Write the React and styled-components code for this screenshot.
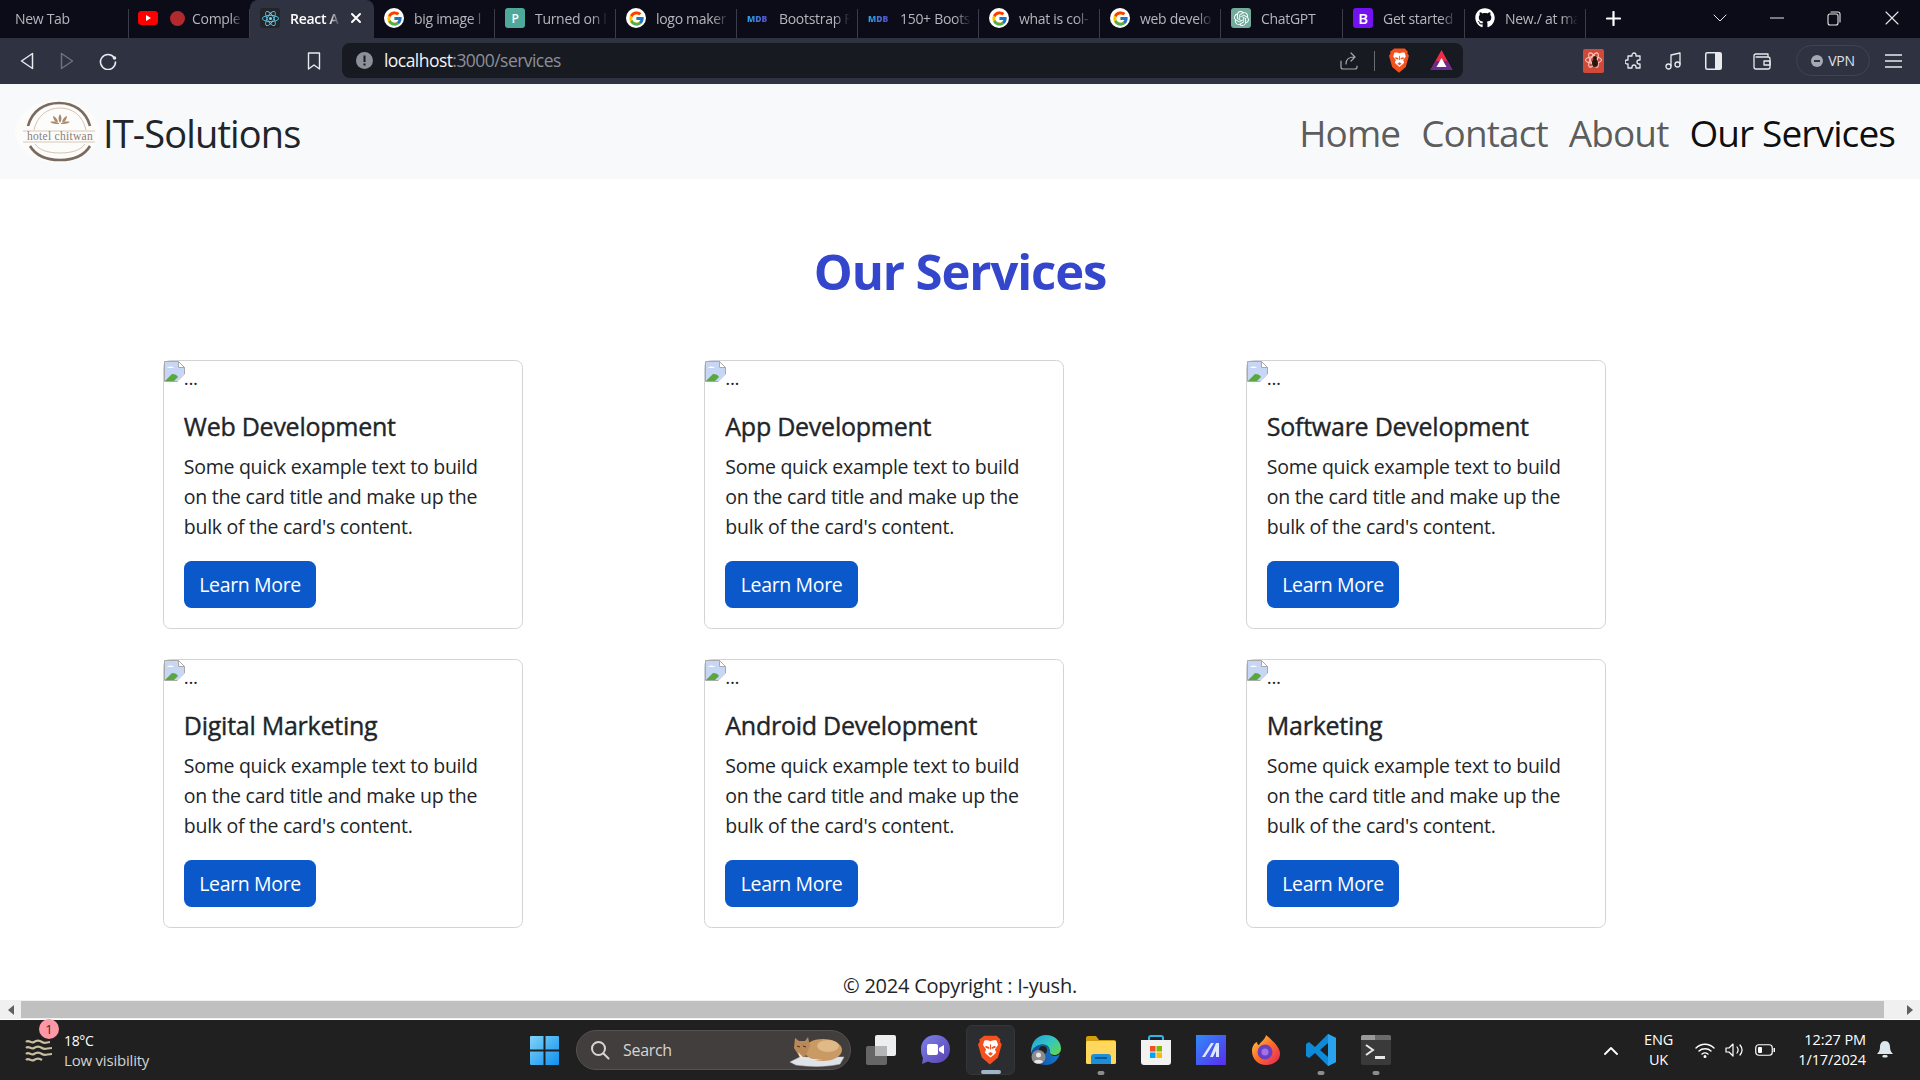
import React from "react";
import styled, { createGlobalStyle } from "styled-components";
import { FcGoogle } from "react-icons/fc";
import { FaGithub } from "react-icons/fa";
import { SiOpenai, SiReact } from "react-icons/si";

const SANS = `"Open Sans", "Noto Sans", "Liberation Sans", sans-serif`;

const Global = createGlobalStyle`
  html, body { margin: 0; padding: 0; width: 1920px; height: 1080px; overflow: hidden; background: #fff; }
  body { font-family: ${SANS}; }
  * { box-sizing: border-box; }
`;

const Screen = styled.div`
  width: 1920px;
  height: 1080px;
  display: flex;
  flex-direction: column;
  overflow: hidden;
`;

/* ---------- browser tab strip ---------- */
const TabStrip = styled.div`
  height: 38px;
  flex: none;
  background: #0b0c17;
  display: flex;
  align-items: stretch;
`;
const Tab = styled.div`
  width: ${(p) => p.$w || 121}px;
  flex: none;
  display: flex;
  align-items: center;
  gap: ${(p) => p.$gap || 10}px;
  padding: 0 ${(p) => (p.$active ? 12 : 8)}px 2px ${(p) => p.$pl || 10}px;
  color: ${(p) => (p.$active ? "#ffffff" : "#b4b6bd")};
  font-size: 14px;
  letter-spacing: -0.3px;
  font-weight: ${(p) => (p.$active ? 600 : 400)};
  background: ${(p) => (p.$active ? "#2f3341" : "transparent")};
  border-radius: ${(p) => (p.$active ? "8px 8px 0 0" : "0")};
  position: relative;
  white-space: nowrap;
  &::after {
    content: "";
    display: ${(p) => (p.$active || p.$noSep ? "none" : "block")};
    position: absolute;
    right: 0;
    top: 9px;
    bottom: 0;
    width: 1px;
    background: #3a3c47;
  }
`;
const TabTitle = styled.span`
  flex: 1;
  min-width: 0;
  overflow: hidden;
  -webkit-mask-image: linear-gradient(to right, #000 78%, transparent 100%);
  mask-image: linear-gradient(to right, #000 78%, transparent 100%);
`;
const Favicon = styled.span`
  width: 20px;
  height: 20px;
  flex: none;
  display: inline-flex;
  align-items: center;
  justify-content: center;
  border-radius: ${(p) => p.$radius || 3}px;
  background: ${(p) => p.$bg || "transparent"};
  color: ${(p) => p.$fg || "#fff"};
  font-size: ${(p) => p.$size || 13}px;
  font-weight: 600;
`;
const MdbMark = styled.span`
  width: 22px;
  flex: none;
  font-size: 8.5px;
  font-weight: 800;
  letter-spacing: 0;
  background: linear-gradient(90deg, #2aa6e8, #5a46c8);
  -webkit-background-clip: text;
  background-clip: text;
  color: transparent;
`;
const Dot = styled.span`
  width: 15px;
  height: 15px;
  margin-right: -5px;
  border-radius: 50%;
  background: #b22a2d;
  flex: none;
`;
const WindowControls = styled.div`
  margin-left: auto;
  display: flex;
  align-items: center;
  height: 100%;
  padding-right: 21px;
  padding-bottom: 2px;
  color: #e8e8ea;
`;
const ControlSlot = styled.span`
  display: inline-flex;
  margin-left: ${(p) => p.$ml}px;
`;
const NewTabPlus = styled.span`
  display: inline-flex;
  margin-left: 20px;
  align-self: center;
  padding-bottom: 2px;
  color: #fff;
`;

/* ---------- browser toolbar ---------- */
const Toolbar = styled.div`
  height: 46px;
  flex: none;
  background: #2f3341;
  display: flex;
  align-items: center;
  padding-left: 20px;
  padding-bottom: 1px;
  color: #e9eaee;
`;
const ToolSlot = styled.span`
  display: inline-flex;
  align-items: center;
  justify-content: center;
  flex: none;
  margin-left: ${(p) => p.$ml || 0}px;
  margin-right: ${(p) => p.$mr || 0}px;
  color: ${(p) => p.$color || "inherit"};
`;
const UrlBar = styled.div`
  width: 1121px;
  height: 35px;
  margin-left: 21px;
  flex: none;
  background: #181a21;
  border-radius: 8px;
  display: flex;
  align-items: center;
  padding-left: 14px;
`;
const UrlText = styled.span`
  margin-left: 11px;
  padding-bottom: 1px;
  font-size: 17.5px;
  letter-spacing: -0.55px;
  color: #f2f3f5;
  flex: 1;
  & > em { font-style: normal; color: #8c8f98; }
`;
const UrlDivider = styled.span`
  width: 1px;
  height: 20px;
  background: #6a6c74;
  margin-left: 16px;
`;
const VpnPill = styled.div`
  margin-left: 25px;
  width: 74px;
  height: 31px;
  border: 1px solid #3f4352;
  border-radius: 16px;
  display: flex;
  align-items: center;
  justify-content: center;
  gap: 5px;
  font-size: 14px;
  letter-spacing: -0.3px;
  color: #dfe0e5;
`;
const VpnDot = styled.span`
  width: 12px;
  height: 12px;
  border-radius: 50%;
  background: #a6a8b3;
  position: relative;
  &::after {
    content: "";
    position: absolute;
    left: 3px;
    right: 3px;
    top: 5px;
    height: 2px;
    background: #2f3341;
  }
`;

/* ---------- page ---------- */
const Page = styled.div`
  flex: 1;
  min-height: 0;
  background: #fff;
  color: #212529;
  display: flex;
  flex-direction: column;
`;
const Navbar = styled.nav`
  height: 95px;
  flex: none;
  background: #f8f9fa;
  display: flex;
  align-items: center;
  padding: 0 25px 0 15px;
`;
const Brand = styled.div`
  display: flex;
  align-items: center;
  gap: 3px;
  font-size: 38px;
  letter-spacing: -0.85px;
  color: #212529;
`;
const BrandName = styled.span`
  position: relative;
  top: 1px;
`;
const NavLinks = styled.div`
  margin-left: auto;
  display: flex;
  gap: 21px;
  position: relative;
  top: 1px;
`;
const NavLink = styled.a`
  font-size: 37px;
  letter-spacing: -0.9px;
  color: ${(p) => (p.$active ? "rgba(0,0,0,0.95)" : "rgba(0,0,0,0.65)")};
`;
const Heading = styled.h1`
  margin: 59px 0 0;
  height: 66px;
  line-height: 66px;
  text-align: center;
  font-size: 49px;
  font-weight: 700;
  letter-spacing: -1.1px;
  color: #3346cc;
`;
const CardGrid = styled.div`
  margin-top: 56px;
  padding-left: 162.8px;
  display: grid;
  grid-template-columns: repeat(3, 360px);
  column-gap: 181.5px;
  row-gap: 30px;
`;
const Card = styled.article`
  height: 269px;
  border: 1.25px solid #d2d3d4;
  border-radius: 7.5px;
  background: #fff;
  display: flex;
  flex-direction: column;
`;
const BrokenImage = styled.div`
  height: 31px;
  display: flex;
  align-items: flex-start;
  font-size: 19px;
  line-height: 26px;
  letter-spacing: -0.4px;
  & > span { margin-top: 4px; margin-left: -1px; }
`;
const CardBody = styled.div`
  padding: 20px 20px;
`;
const CardTitle = styled.h5`
  margin: -1px 0 11px;
  font-size: 25px;
  line-height: 30px;
  font-weight: 500;
  letter-spacing: -0.25px;
  -webkit-text-stroke: 0.4px #212529;
  color: #212529;
`;
const CardText = styled.p`
  margin: 0 0 19px;
  font-size: 19.5px;
  line-height: 30px;
  letter-spacing: -0.27px;
  color: #212529;
`;
const Button = styled.a`
  display: inline-flex;
  align-items: center;
  justify-content: center;
  width: 132.5px;
  height: 47.5px;
  padding-top: 1px;
  border-radius: 7.5px;
  background: #0a58ca;
  color: #fff;
  font-size: 19.5px;
  letter-spacing: -0.35px;
`;
const Footer = styled.footer`
  margin-top: 43px;
  text-align: center;
  font-size: 20px;
  line-height: 30px;
  letter-spacing: -0.24px;
  color: #212529;
`;

/* ---------- horizontal scrollbar ---------- */
const ScrollBar = styled.div`
  height: 20px;
  flex: none;
  background: #f0f0f0;
  display: flex;
  align-items: center;
  border-bottom: 1px solid #fff;
`;
const ScrollArrow = styled.span`
  width: ${(p) => p.$w}px;
  flex: none;
  display: flex;
  justify-content: flex-start;
  padding-left: ${(p) => p.$pl}px;
`;
const ScrollThumb = styled.div`
  flex: 1;
  height: 17px;
  background: #c0c0c0;
`;
const Arrow = styled.span`
  width: 0;
  height: 0;
  border-top: 5px solid transparent;
  border-bottom: 5px solid transparent;
  ${(p) => (p.$left ? "border-right: 6px solid #5f5f5f;" : "border-left: 6px solid #5f5f5f;")}
`;

/* ---------- windows taskbar ---------- */
const Taskbar = styled.div`
  height: 60px;
  flex: none;
  background: #202020;
  display: flex;
  align-items: center;
  color: #fff;
  position: relative;
`;
const Weather = styled.div`
  width: 530px;
  flex: none;
  display: flex;
  align-items: center;
  padding-left: 25px;
  gap: 10px;
  position: relative;
`;
const WeatherBadge = styled.span`
  position: absolute;
  left: 39px;
  top: -12px;
  width: 20px;
  height: 20px;
  border-radius: 50%;
  background: #ff97a6;
  color: #4a1d25;
  font-size: 13px;
  display: flex;
  align-items: center;
  justify-content: center;
`;
const WeatherText = styled.div`
  font-size: 14px;
  line-height: 20px;
  letter-spacing: -0.35px;
  & > small { display: block; margin-top: -1px; font-size: 15px; letter-spacing: -0.2px; color: #d3d3d3; }
`;
const SearchPill = styled.div`
  margin-left: 17px;
  width: 275px;
  height: 40px;
  flex: none;
  border-radius: 20px;
  background: #423e3d;
  border: 1px solid #55514f;
  display: flex;
  align-items: center;
  padding-left: 13px;
  gap: 13px;
  font-size: 16px;
  letter-spacing: -0.3px;
  color: #d7d5d4;
`;
const SearchCat = styled.span`
  margin-left: auto;
  margin-right: 4px;
  display: inline-flex;
`;
const Dock = styled.div`
  display: flex;
  align-items: center;
  margin-left: 2px;
`;
const DockItem = styled.div`
  width: ${(p) => (p.$active ? 49 : 55)}px;
  margin: ${(p) => (p.$active ? "0 3px" : "0")};
  height: 50px;
  display: flex;
  align-items: center;
  justify-content: center;
  position: relative;
  border-radius: 6px;
  background: ${(p) => (p.$active ? "#2b2d30" : "transparent")};
  border: ${(p) => (p.$active ? "1px solid #353638" : "none")};
  &::after {
    content: "";
    display: ${(p) => (p.$running || p.$active ? "block" : "none")};
    position: absolute;
    bottom: 0;
    left: 50%;
    transform: translateX(-50%);
    width: ${(p) => (p.$active ? 20 : 7)}px;
    height: 4px;
    border-radius: 2px;
    background: ${(p) => (p.$active ? "#9fb5c9" : "#8d8d8d")};
  }
`;
const Tray = styled.div`
  margin-left: auto;
  display: flex;
  align-items: center;
  padding-right: 27px;
`;
const TraySlot = styled.span`
  display: inline-flex;
  margin-left: ${(p) => p.$ml}px;
`;
const Lang = styled.div`
  margin-left: 26px;
  text-align: center;
  font-size: 14.5px;
  line-height: 20px;
  letter-spacing: -0.2px;
`;
const Clock = styled.div`
  margin-left: 8px;
  width: 83px;
  flex: none;
  text-align: right;
  font-size: 14.5px;
  line-height: 20px;
  letter-spacing: -0.1px;
  white-space: nowrap;
`;

/* ---------- drawings ---------- */
const Ic = ({ w = 18, h = 18, vb, children, sw = 1.6, fill = "none", stroke = "currentColor" }) => (
  <svg width={w} height={h} viewBox={vb || `0 0 ${w} ${h}`} fill={fill} stroke={stroke} strokeWidth={sw} strokeLinecap="round" strokeLinejoin="round">
    {children}
  </svg>
);

const YouTube = () => (
  <svg width="20" height="14" viewBox="0 0 20 14"><rect width="20" height="14" rx="3.5" fill="#ff0000" /><path d="M8 4l5 3-5 3z" fill="#fff" /></svg>
);
const Google = () => (
  <Favicon $bg="#fff" $radius={10}><FcGoogle size={17} /></Favicon>
);
const HotelLogo = () => (
  <svg width="85" height="63" viewBox="0 0 85 63">
    <ellipse cx="42.5" cy="31.5" rx="42.5" ry="31.5" fill="#fcfcfb" />
    <path d="M13 26C17 11 29 3 44 3s27 8 31 23" fill="none" stroke="#7b6a5f" strokeWidth="2.6" />
    <path d="M19 30C22 16 32 8 45 8s23 8 26 22" fill="none" stroke="#cdb49c" strokeWidth="0.8" />
    <path d="M35 22c3 2 6 2 9 2v-1c-2-1-5-2-9-1zM55 22c-3 2-6 2-9 2v-1c2-1 5-2 9-1zM45 23c-2-3-2-6 0-9 2 3 2 6 0 9zM43 23c-3-1-5-4-5-7 3 1 5 4 5 7zM47 23c3-1 5-4 5-7-3 1-5 4-5 7z" fill="#ab8a6c" />
    <path d="M8 31h72M8 42h72" stroke="#d6c3b0" strokeWidth="0.9" />
    <text x="45" y="40" textAnchor="middle" fontFamily="Liberation Serif, serif" fontSize="11.5" fill="#8b7d75" letterSpacing="0.3">hotel chitwan</text>
    <path d="M20 44C24 50 33 53 45 53s21-3 25-9" fill="none" stroke="#cdb49c" strokeWidth="0.8" />
    <path d="M15 46C21 56 32 60 45 60s24-4 30-14" fill="none" stroke="#7b6a5f" strokeWidth="2.6" />
  </svg>
);
const BrokenIcon = () => (
  <svg width="21" height="21" viewBox="0 0 21 21">
    <path d="M.5.5h14l6 6v7L14 20.5H.5z" fill="#c6d6f4" stroke="#a9a9a9" />
    <path d="M14.5.5v6h6z" fill="#fff" stroke="#a9a9a9" />
    <path d="M3 7c2-2 5-2 7 0H3z" fill="#fff" />
    <path d="M1 20l7-7c3 0 5 1 6 3l-4 4z" fill="#58a83f" />
    <path d="M13 21l8-8v8z" fill="#fff" />
  </svg>
);
const BraveLogo = ({ size = 21 }) => (
  <svg width={size} height={size * 1.2} viewBox="0 0 20 24">
    <path d="M5 0.500h10l3 3-.5 1.500 1.500 2.500-3 10.500-6.500 5.500-6.500-5.500L0 7.500 1.500 5 1 3.500z" fill="#f4511e" />
    <path d="M10 5c1.800-1 3.500-1 5-.5l1 3.500-2.500 3.500 1 2.500-1.500 1.500L10 18l-3-2.500L5.500 14l1-2.500L4 8l1-3.500C6.500 4 8.200 4 10 5z" fill="#fff" />
    <path d="M6.500 9.500l2 .8M13.500 9.500l-2 .8" stroke="#f4511e" strokeWidth="1.400" strokeLinecap="round" />
    <path d="M8 15l2-1.500 2 1.500-2 1.500z" fill="#f4511e" />
    <path d="M10 7.500v4" stroke="#f4511e" strokeWidth=".8" />
  </svg>
);
const BatLogo = () => (
  <svg width="23" height="23" viewBox="0 0 23 23">
    <path d="M11.5 1L22.5 21H.5z" fill="#ea2f4b" />
    <path d="M.5 21l5-9h12l5 9z" fill="#6b2c91" />
    <path d="M11.5 9l5 9h-10z" fill="#fff" />
  </svg>
);
const BugExtension = () => (
  <svg width="21" height="24" viewBox="0 0 21 24">
    <rect width="21" height="24" rx="2" fill="#d04a3a" />
    <g fill="none" stroke="#f7c9bd" strokeWidth="1.1"><ellipse cx="10.5" cy="11" rx="8" ry="3.2" /><ellipse cx="10.5" cy="11" rx="8" ry="3.2" transform="rotate(60 10.5 11)" /><ellipse cx="10.5" cy="11" rx="8" ry="3.2" transform="rotate(120 10.5 11)" /></g>
    <ellipse cx="12" cy="14" rx="3" ry="4" fill="#2a1512" />
    <circle cx="12" cy="9" r="2" fill="#2a1512" />
  </svg>
);
const WindowsLogo = () => (
  <svg width="29" height="29" viewBox="0 0 29 29">
    <defs><linearGradient id="win" x1="0" y1="0" x2="1" y2="1"><stop offset="0" stopColor="#7fd4f7" /><stop offset="1" stopColor="#0f8ff0" /></linearGradient></defs>
    <path d="M0 1a1 1 0 011-1h12.500v13.500H0zM15.500 0H28a1 1 0 011 1v12.500H15.500zM0 15.500h13.500V29H1a1 1 0 01-1-1zM15.500 15.500H29V28a1 1 0 01-1 1H15.500z" fill="url(#win)" />
  </svg>
);
const Cat = () => (
  <svg width="58" height="34" viewBox="0 0 58 34">
    <path d="M2 29l10-5h44l-4 7c-12 3-30 3-44 1z" fill="#dfe3e8" stroke="#bfc4ca" strokeWidth=".5" />
    <ellipse cx="35" cy="17" rx="19" ry="11" fill="#c99a63" />
    <ellipse cx="40" cy="13" rx="11" ry="6" fill="#e0b988" />
    <path d="M7 5l4 3h6l3-4 2 9-5 11-6-1-5-8z" fill="#b98a57" />
    <path d="M10 19l7 7h18c-8 1-18 2-23-1z" fill="#f2e6d2" />
    <path d="M9 13l3 1M15 13l3 1" stroke="#3f2e1e" strokeWidth="1" />
  </svg>
);
const TaskView = () => (
  <svg width="30" height="30" viewBox="0 0 30 30">
    <rect x="9" y="0" width="21" height="21" rx="2" fill="#eceef0" />
    <rect x="0" y="11" width="21" height="19" rx="2" fill="#6a6a6a" opacity=".95" />
    <rect x="9" y="11" width="12" height="10" fill="#b5b5b5" />
  </svg>
);
const Meet = () => (
  <svg width="29" height="30" viewBox="0 0 29 30">
    <defs><linearGradient id="meet" x1="0" y1="0" x2="1" y2="1"><stop offset="0" stopColor="#7b83eb" /><stop offset="1" stopColor="#5a3fb0" /></linearGradient></defs>
    <path d="M14.500 0C23 0 29 6 29 14s-6 14-14 14c-3 0-6-.4-8-1.600L1 29l1-6C.5 20.500 0 17.500 0 14 0 6 6 0 14.500 0z" fill="url(#meet)" />
    <rect x="6" y="9" width="11" height="11" rx="2" fill="#fff" />
    <path d="M18 13l5-3v9l-5-3z" fill="#fff" />
  </svg>
);
const Edge = () => (
  <svg width="30" height="30" viewBox="0 0 30 30">
    <defs>
      <linearGradient id="eg1" x1="0" y1="0" x2="1" y2=".8"><stop offset="0" stopColor="#1e9fe0" /><stop offset=".55" stopColor="#33c6c0" /><stop offset="1" stopColor="#5ed65a" /></linearGradient>
      <linearGradient id="eg2" x1="0" y1="0" x2="1" y2="0"><stop offset="0" stopColor="#0d4f9e" /><stop offset="1" stopColor="#1a78d0" /></linearGradient>
    </defs>
    <path d="M15 0c8.500 0 15 6 15 13.500 0 4-3 6.500-6.500 6.500-2.500 0-4.500-1-4.500-2.500 0-3-1-8-7-8-6.500 0-11 5-12 9.500C-.5 8 5.500 0 15 0z" fill="url(#eg1)" />
    <path d="M.5 19c0-5 5-9.500 11-9.500 4.500 0 7.500 3 7.500 8 0 2 2.500 3.500 5 3.500 2 0 4-1 5-2.500C27 25.500 21.500 30 15 30 7 30 .5 26 .5 19z" fill="url(#eg2)" />
    <circle cx="12" cy="15" r="4" fill="#202020" />
    <circle cx="7.500" cy="22" r="7" fill="#8b8b8b" />
    <circle cx="7.500" cy="20" r="2.500" fill="#e6e6e6" />
    <path d="M3 27c1-3 8-3 9 0-2 2-7 2-9 0z" fill="#e6e6e6" />
  </svg>
);
const Folder = () => (
  <svg width="30" height="28" viewBox="0 0 30 28">
    <path d="M0 2a2 2 0 012-2h8l3 4h15a2 2 0 012 2v4H0z" fill="#d49d0b" />
    <rect y="5" width="30" height="23" rx="1.500" fill="#ffd75c" />
    <path d="M5 28v-7a3 3 0 013-3h14a3 3 0 013 3v7z" fill="#1f8ed8" />
    <rect x="9" y="21" width="12" height="2" fill="#0c5a97" />
  </svg>
);
const Store = () => (
  <svg width="30" height="30" viewBox="0 0 30 30">
    <path d="M8 5V3a2 2 0 012-2h10a2 2 0 012 2v2" fill="none" stroke="#2bb6ec" strokeWidth="2" />
    <path d="M0 5h30v22a3 3 0 01-3 3H3a3 3 0 01-3-3z" fill="#f2f2f2" />
    <rect x="9" y="11" width="5.500" height="5.500" fill="#f25022" />
    <rect x="15.500" y="11" width="5.500" height="5.500" fill="#7fba00" />
    <rect x="9" y="17.500" width="5.500" height="5.500" fill="#00a4ef" />
    <rect x="15.500" y="17.500" width="5.500" height="5.500" fill="#ffb900" />
  </svg>
);
const Azure = () => (
  <svg width="30" height="30" viewBox="0 0 30 30">
    <defs><linearGradient id="az" x1="0" y1="0" x2="1" y2="1"><stop offset="0" stopColor="#2f8bf6" /><stop offset="1" stopColor="#5a2df0" /></linearGradient></defs>
    <rect width="30" height="30" fill="url(#az)" />
    <path d="M6 22L15 8h3L9 22zM14 22l6-14h3v14h-3v-6l-3 6z" fill="#dfe7ff" />
  </svg>
);
const Firefox = () => (
  <svg width="28" height="30" viewBox="0 0 28 30">
    <defs><linearGradient id="ff" x1="0" y1="0" x2="1" y2="1"><stop offset="0" stopColor="#ffd43a" /><stop offset=".5" stopColor="#ff6b2b" /><stop offset="1" stopColor="#e3215f" /></linearGradient></defs>
    <path d="M14 30C6 30 0 24 0 16 0 12 2 8 5 7c0 2 1 3 2 3 2-4 6-5 7-10 6 5 9 8 11 11 2 3 3 5 3 8 0 6-6 11-14 11z" fill="url(#ff)" />
    <circle cx="13" cy="17" r="7.500" fill="#6a3fc4" />
    <circle cx="13" cy="17" r="3.500" fill="#a273e6" />
  </svg>
);
const VSCode = () => (
  <svg width="30" height="32" viewBox="0 0 30 32">
    <path d="M22 0l8 4v24l-8 4-13-13-6 5-3-2v-12l3-2 6 5z" fill="#0e8ad6" />
    <path d="M22 9l-8 7 8 7z" fill="#202020" />
    <path d="M22 0l8 4v24l-8 4z" fill="#2aa3ee" />
  </svg>
);
const Terminal = () => (
  <svg width="30" height="30" viewBox="0 0 30 30">
    <rect width="30" height="30" rx="2" fill="#3a3a3a" />
    <path d="M0 2a2 2 0 012-2h12v5H0z" fill="#9a9a9a" />
    <path d="M14 0h14a2 2 0 012 2v3H14z" fill="#6a6a6a" />
    <path d="M5 10l7 5-7 5" fill="none" stroke="#e8e8e8" strokeWidth="2" />
    <rect x="14" y="21" width="10" height="3" fill="#e8e8e8" />
  </svg>
);

const services = [
  "Web Development",
  "App Development",
  "Software Development",
  "Digital Marketing",
  "Android Development",
  "Marketing",
];

const tabs = [
  { title: "New Tab", w: 129, pl: 15, bare: true },
  { title: "Comple", icon: <YouTube />, extra: <Dot />, gap: 12, pl: 9 },
  { title: "React A", active: true, w: 124, icon: <Favicon $bg="#23252b"><SiReact size={17} color="#61dafb" /></Favicon> },
  { title: "big image l", icon: <Google /> },
  { title: "Turned on l", icon: <Favicon $bg="#4fa99a" $size={12}>P</Favicon> },
  { title: "logo maker", icon: <Google /> },
  { title: "Bootstrap F", icon: <MdbMark>MDB</MdbMark> },
  { title: "150+ Boots", icon: <MdbMark>MDB</MdbMark> },
  { title: "what is col-", icon: <Google /> },
  { title: "web develo", icon: <Google /> },
  { title: "ChatGPT", icon: <Favicon $bg="#74aa9c"><SiOpenai size={15} /></Favicon>, w: 122 },
  { title: "Get started", icon: <Favicon $bg="#7312f0" $size={15}>B</Favicon>, w: 122 },
  { title: "New./ at ma", icon: <FaGithub size={20} color="#fff" /> },
];

export default function App() {
  return (
    <Screen>
      <Global />
      <TabStrip>
        {tabs.map((t) => (
          <Tab key={t.title} $w={t.w} $active={t.active} $gap={t.gap} $pl={t.pl}>
            {t.icon}
            {t.extra}
            <TabTitle>{t.title}</TabTitle>
            {t.active && (
              <Ic w={12} h={12} sw={2}><path d="M2 2l8 8M10 2l-8 8" /></Ic>
            )}
          </Tab>
        ))}
        <NewTabPlus>
          <Ic w={15} h={15} sw={2.2}><path d="M7.500 1v13M1 7.500h13" /></Ic>
        </NewTabPlus>
        <WindowControls>
          <ControlSlot $ml={0}><Ic w={14} h={8} sw={1}><path d="M1 1l6 6 6-6" /></Ic></ControlSlot>
          <ControlSlot $ml={43}><Ic w={14} h={2} sw={1.2}><path d="M0 1h14" /></Ic></ControlSlot>
          <ControlSlot $ml={43}><Ic w={14} h={15} sw={1.1}><rect x="1" y="3" width="10" height="11" rx="2" /><path d="M4 1h7a2 2 0 012 2v8" /></Ic></ControlSlot>
          <ControlSlot $ml={44}><Ic w={14} h={14} sw={1.1}><path d="M1 1l12 12M13 1L1 13" /></Ic></ControlSlot>
        </WindowControls>
      </TabStrip>

      <Toolbar>
        <ToolSlot><Ic w={14} h={18} sw={1.5}><path d="M12.500 1.500v15L1.500 9z" /></Ic></ToolSlot>
        <ToolSlot $ml={26} $color="#6f727c"><Ic w={14} h={18} sw={1.5}><path d="M1.500 1.500v15l11-7.500z" /></Ic></ToolSlot>
        <ToolSlot $ml={25}><Ic w={18} h={18} sw={1.6}><path d="M15 5.500A7.500 7.500 0 1016.500 10" /><circle cx="15.500" cy="6" r="1" fill="currentColor" /></Ic></ToolSlot>
        <ToolSlot $ml={190}><Ic w={14} h={18} sw={1.4}><path d="M1.500 1h11v16l-5.500-4-5.500 4z" /></Ic></ToolSlot>
        <UrlBar>
          <svg width="17" height="17" viewBox="0 0 17 17"><circle cx="8.500" cy="8.500" r="8.500" fill="#8d9099" /><rect x="7.500" y="3.500" width="2" height="6.500" fill="#181a21" /><rect x="7.500" y="11.500" width="2" height="2" fill="#181a21" /></svg>
          <UrlText>localhost<em>:3000/services</em></UrlText>
          <ToolSlot $color="#a6a8ae"><Ic w={18} h={18} sw={1.2}><path d="M1 9v6a2 2 0 002 2h12a2 2 0 002-2v-1M6 12c0-5 3-7 8-7M11 1l4 4-4 4" /></Ic></ToolSlot>
          <UrlDivider />
          <ToolSlot $ml={14}><BraveLogo /></ToolSlot>
          <ToolSlot $ml={20} $mr={10}><BatLogo /></ToolSlot>
        </UrlBar>
        <ToolSlot $ml={120}><BugExtension /></ToolSlot>
        <ToolSlot $ml={21}><Ic w={18} h={18} sw={1.3}><path d="M7 3a2 2 0 014 0v1h4v4h-1a2 2 0 000 4h1v4h-4v-1a2 2 0 00-4 0v1H3v-4H2a2 2 0 010-4h1V4h4z" /></Ic></ToolSlot>
        <ToolSlot $ml={22}><Ic w={17} h={18} sw={1.3}><path d="M6 14V3l9-2v11" /><circle cx="3.500" cy="14.500" r="2.500" /><circle cx="12.500" cy="12.500" r="2.500" /></Ic></ToolSlot>
        <ToolSlot $ml={23}><svg width="17" height="18" viewBox="0 0 17 18"><rect x=".75" y=".75" width="15.500" height="16.500" rx="1.500" fill="none" stroke="#e9eaee" strokeWidth="1.500" /><rect x="10" y="1" width="6" height="16" fill="#e9eaee" /></svg></ToolSlot>
        <ToolSlot $ml={31}><Ic w={18} h={18} sw={1.3}><path d="M15 5V2H3a2 2 0 00-2 2v11a2 2 0 002 2h12a2 2 0 002-2V7a2 2 0 00-2-2H3" /><rect x="11" y="9" width="6" height="4" /></Ic></ToolSlot>
        <VpnPill><VpnDot />VPN</VpnPill>
        <ToolSlot $ml={15}><Ic w={17} h={14} sw={1.4}><path d="M0 1h17M0 7h17M0 13h17" /></Ic></ToolSlot>
      </Toolbar>

      <Page>
        <Navbar>
          <Brand><HotelLogo /><BrandName>IT-Solutions</BrandName></Brand>
          <NavLinks>
            <NavLink>Home</NavLink>
            <NavLink>Contact</NavLink>
            <NavLink>About</NavLink>
            <NavLink $active>Our Services</NavLink>
          </NavLinks>
        </Navbar>
        <Heading>Our Services</Heading>
        <CardGrid>
          {services.map((s) => (
            <Card key={s}>
              <BrokenImage><BrokenIcon /><span>...</span></BrokenImage>
              <CardBody>
                <CardTitle>{s}</CardTitle>
                <CardText>Some quick example text to build on the card title and make up the bulk of the card's content.</CardText>
                <Button>Learn More</Button>
              </CardBody>
            </Card>
          ))}
        </CardGrid>
        <Footer>© 2024 Copyright : I-yush.</Footer>
      </Page>

      <ScrollBar>
        <ScrollArrow $w={21} $pl={8}><Arrow $left /></ScrollArrow>
        <ScrollThumb />
        <ScrollArrow $w={36} $pl={23}><Arrow /></ScrollArrow>
      </ScrollBar>

      <Taskbar>
        <Weather>
          <svg width="29" height="26" viewBox="0 0 29 26" fill="none" stroke="#c8bfa0" strokeWidth="2.200">
            <path d="M1 5c3-3 5 2 8 0s5-2 8 0 5 0 8 0M1 11c3-3 5 2 8 0s5-2 8 0 5 0 10 0M1 17c3-3 5 2 8 0s5-2 8 0 5 0 10 0M1 23c3-3 5 2 8 0s5-2 8 0" />
          </svg>
          <WeatherBadge>1</WeatherBadge>
          <WeatherText>18°C<small>Low visibility</small></WeatherText>
        </Weather>
        <WindowsLogo />
        <SearchPill>
          <Ic w={20} h={20} sw={2}><circle cx="8.500" cy="8.500" r="6.500" /><path d="M13.500 13.500l5 5" /></Ic>
          Search
          <SearchCat><Cat /></SearchCat>
        </SearchPill>
        <Dock>
          <DockItem><TaskView /></DockItem>
          <DockItem><Meet /></DockItem>
          <DockItem $active><BraveLogo size={25} /></DockItem>
          <DockItem><Edge /></DockItem>
          <DockItem $running><Folder /></DockItem>
          <DockItem><Store /></DockItem>
          <DockItem><Azure /></DockItem>
          <DockItem><Firefox /></DockItem>
          <DockItem $running><VSCode /></DockItem>
          <DockItem $running><Terminal /></DockItem>
        </Dock>
        <Tray>
          <Ic w={14} h={9} sw={1.8}><path d="M1 8l6-6 6 6" /></Ic>
          <Lang>ENG<br />UK</Lang>
          <TraySlot $ml={22}><Ic w={20} h={16} sw={1.4}><path d="M1 6c5-5 13-5 18 0M4 9c3-3 9-3 12 0M7 12c2-1.500 4-1.500 6 0" /><circle cx="10" cy="14.500" r=".8" fill="currentColor" /></Ic></TraySlot>
          <TraySlot $ml={10}><Ic w={20} h={16} sw={1.200}><path d="M1 6v4h3l4 4V2L4 6zM12 5c1.500 2 1.500 4 0 6M15 3c2.500 3 2.500 7 0 10" /></Ic></TraySlot>
          <TraySlot $ml={10}><svg width="20" height="12" viewBox="0 0 20 12"><rect x=".75" y=".75" width="16.500" height="10.500" rx="3" fill="none" stroke="#fff" strokeWidth="1.200" /><rect x="3" y="3" width="4" height="6" rx="1" fill="#fff" /><rect x="18.500" y="4" width="1.500" height="4" fill="#fff" /></svg></TraySlot>
          <Clock>12:27 PM<br />1/17/2024</Clock>
          <TraySlot $ml={11}><svg width="16" height="20" viewBox="0 0 16 20"><path d="M8 1c3.500 0 5 3 5 6 0 3 1 5 3 7H0c2-2 3-4 3-7 0-3 1.500-6 5-6z" fill="#dbe9ee" /><rect x="5.500" y="15" width="5" height="2.500" rx="1.200" fill="#dbe9ee" /></svg></TraySlot>
        </Tray>
      </Taskbar>
    </Screen>
  );
}
